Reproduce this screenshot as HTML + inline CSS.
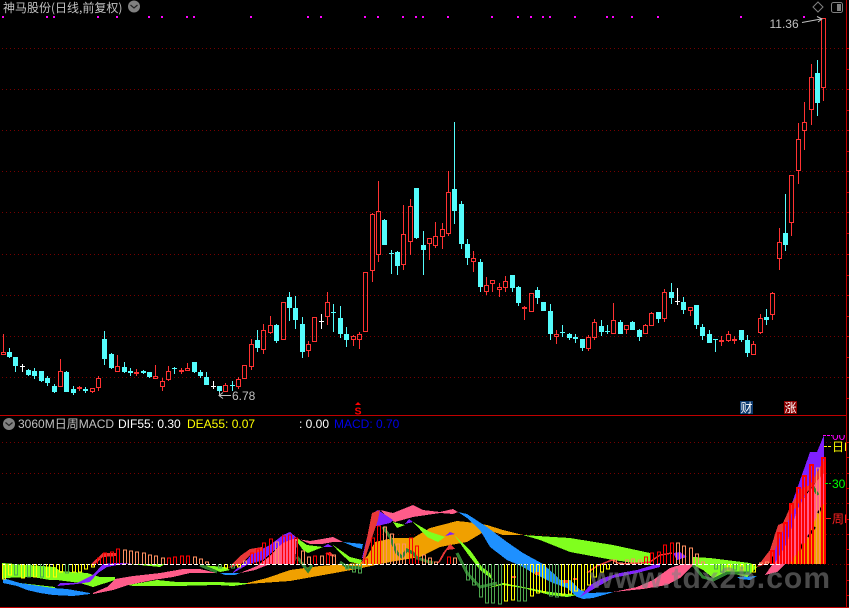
<!DOCTYPE html>
<html><head><meta charset="utf-8"><title>神马股份</title>
<style>
html,body{margin:0;padding:0;background:#000;width:849px;height:608px;overflow:hidden}
svg{position:absolute;left:0;top:0;display:block}
text{font-family:"Liberation Sans","WenQuanYi Zen Hei","Noto Sans CJK SC",sans-serif;font-size:12px}
</style></head><body>
<svg width="849" height="608" viewBox="0 0 849 608" xmlns="http://www.w3.org/2000/svg">
<rect width="849" height="608" fill="#000"/>
<g shape-rendering="crispEdges">
<path stroke="#760000" stroke-dasharray="1 3" fill="none" d="M2 48.5H845M2 89.5H845M2 130.5H845M2 171.5H845M2 212.5H845M2 254.5H845M2 295.5H845M2 336.5H845M2 377.5H845M2 442.5H845M2 473.5H845M2 503.5H845M2 534.5H845M780 564.5H845"/>
<path stroke="#c00000" fill="none" d="M0 415.5H846M0 607.5H849M846.5 0V608M847 48.5h2M847 69.5h2M847 89.5h2M847 110.5h2M847 130.5h2M847 151.5h2M847 171.5h2M847 192.5h2M847 212.5h2M847 233.5h2M847 254.5h2M847 275.5h2M847 295.5h2M847 316.5h2M847 336.5h2M847 357.5h2M847 377.5h2M847 398.5h2M847 442.5h2M847 457.5h2M847 473.5h2M847 488.5h2M847 503.5h2M847 519.5h2M847 534.5h2M847 549.5h2M847 564.5h2M847 580.5h2M847 595.5h2"/>
<path fill="#ff00ff" d="M2 16h2v2h-2zM46 16h2v2h-2zM53 16h2v2h-2zM97 16h2v2h-2zM116 16h2v2h-2zM148 16h2v2h-2zM161 16h2v2h-2zM186 16h2v2h-2zM193 16h2v2h-2zM250 16h2v2h-2zM307 16h2v2h-2zM320 16h2v2h-2zM364 16h2v2h-2zM377 16h2v2h-2zM402 16h2v2h-2zM415 16h2v2h-2zM422 16h2v2h-2zM447 16h2v2h-2zM491 16h2v2h-2zM517 16h2v2h-2zM530 16h2v2h-2zM542 16h2v2h-2zM549 16h2v2h-2zM574 16h2v2h-2zM606 16h2v2h-2zM612 16h2v2h-2zM631 16h2v2h-2zM657 16h2v2h-2zM740 16h2v2h-2zM803 16h2v2h-2z"/>
<!-- red candles -->
<path fill="none" stroke="#ff3232" d="M3.5 334V352M1.5 352.5h4V354.5h-4zM60.5 359V371M58.5 371.5h4V386.5h-4zM79.5 386V391M77.5 387.5h4V388.5h-4zM90.5 388.5h4V391.5h-4zM92.5 392V393M98.5 376V378M96.5 378.5h4V387.5h-4zM98.5 388V391M117.5 355V366M115.5 366.5h4V371.5h-4zM136.5 369V376M134.5 372.5h4V373.5h-4zM155.5 365V376M153.5 376.5h4V378.5h-4zM162.5 378V381M160.5 381.5h4V386.5h-4zM162.5 387V391M168.5 366V371M166.5 371.5h4V379.5h-4zM168.5 380V381M181.5 368V374M179.5 370.5h4V371.5h-4zM187.5 363V368M185.5 368.5h4V370.5h-4zM225.5 383V385M223.5 385.5h4V391.5h-4zM238.5 377V379M236.5 379.5h4V386.5h-4zM238.5 387V389M242.5 365.5h4V378.5h-4zM251.5 339V344M249.5 344.5h4V366.5h-4zM251.5 367V370M263.5 324V330M261.5 330.5h4V349.5h-4zM263.5 350V354M270.5 316V325M268.5 325.5h4V332.5h-4zM270.5 333V334M281.5 302.5h4V339.5h-4zM308.5 341V344M306.5 344.5h4V350.5h-4zM308.5 351V357M312.5 317.5h4V341.5h-4zM327.5 292V302M325.5 302.5h4V316.5h-4zM327.5 317V325M353.5 335V336M351.5 336.5h4V339.5h-4zM353.5 340V346M359.5 332V334M357.5 334.5h4V339.5h-4zM359.5 340V349M363.5 272.5h4V331.5h-4zM372.5 213V214M370.5 214.5h4V270.5h-4zM372.5 271V282M378.5 181V211M376.5 211.5h4V254.5h-4zM378.5 255V262M403.5 205V234M401.5 234.5h4V264.5h-4zM403.5 265V270M410.5 199V206M408.5 206.5h4V241.5h-4zM410.5 242V255M427.5 238.5h4V243.5h-4zM429.5 244V260M435.5 222V236M433.5 236.5h4V245.5h-4zM435.5 246V248M442.5 223V229M440.5 229.5h4V236.5h-4zM442.5 237V249M448.5 171V192M446.5 192.5h4V233.5h-4zM448.5 234V236M473.5 251V258M471.5 258.5h4V261.5h-4zM473.5 262V272M486.5 277V285M484.5 285.5h4V291.5h-4zM486.5 292V295M490.5 280.5h4V283.5h-4zM492.5 284V292M499.5 283V287M497.5 287.5h4V289.5h-4zM499.5 290V297M505.5 276V281M503.5 281.5h4V287.5h-4zM505.5 288V292M524.5 306V320M522.5 307.5h4V308.5h-4zM529.5 293.5h4V311.5h-4zM556.5 330V334M554.5 334.5h4V336.5h-4zM556.5 337V344M588.5 335V337M586.5 337.5h4V348.5h-4zM588.5 349V351M594.5 319V322M592.5 322.5h4V337.5h-4zM594.5 338V340M613.5 303V320M611.5 320.5h4V333.5h-4zM624.5 325.5h4V329.5h-4zM626.5 330V334M645.5 324V325M643.5 325.5h4V333.5h-4zM649.5 313.5h4V325.5h-4zM651.5 312V313M664.5 289V292M662.5 292.5h4V318.5h-4zM664.5 319V322M688.5 307.5h4V310.5h-4zM690.5 311V316M721.5 336V346M719.5 340.5h4V341.5h-4zM728.5 331V334M726.5 334.5h4V340.5h-4zM728.5 341V342M734.5 336V344M732.5 339.5h4V340.5h-4zM753.5 341V344M751.5 344.5h4V354.5h-4zM760.5 314V318M758.5 318.5h4V332.5h-4zM760.5 333V334M772.5 292V293M770.5 293.5h4V314.5h-4zM772.5 315V320M779.5 228V242M777.5 242.5h4V258.5h-4zM779.5 259V270M789.5 175.5h4V222.5h-4zM791.5 223V236M798.5 123V139M796.5 139.5h4V170.5h-4zM798.5 171V184M804.5 102V122M802.5 122.5h4V130.5h-4zM804.5 131V150M811.5 64V77M809.5 77.5h4V109.5h-4zM811.5 110V125M821.5 18.5h4V87.5h-4zM823.5 88V101"/>
<!-- cyan wicks -->
<path fill="none" stroke="#54fcfc" d="M9.5 348V358M15.5 357V372M28.5 369V376M34.5 368V379M41.5 371V382M47.5 376V386M54.5 384V393M66.5 371V392M73.5 386V395M85.5 387V393M104.5 331V365M111.5 353V369M124.5 362V373M130.5 368V376M143.5 370V374M149.5 372V378M174.5 367V374M194.5 362V373M200.5 370V378M206.5 372V385M219.5 386V393M232.5 381V391M257.5 330V352M276.5 324V343M289.5 292V321M295.5 296V329M302.5 317V358M333.5 304V332M340.5 306V338M346.5 327V347M384.5 219V245M391.5 250V274M397.5 251V275M416.5 188V239M423.5 231V275M454.5 122V224M461.5 201V249M467.5 239V265M480.5 259V292M512.5 275V292M518.5 286V306M537.5 287V304M543.5 302V311M550.5 304V340M562.5 325V337M569.5 333V340M575.5 334V343M582.5 339V351M601.5 320V336M607.5 325V334M620.5 320V334M632.5 321V330M639.5 329V341M658.5 312V323M671.5 283V304M683.5 297V314M696.5 305V329M702.5 324V340M709.5 330V343M715.5 339V352M741.5 330V342M747.5 335V357M766.5 309V325M785.5 194V251M817.5 60V116"/>
<!-- cyan bodies -->
<path fill="#54fcfc" d="M7 352h5v5h-5zM13 357h5v9h-5zM26 370h5v5h-5zM32 371h5v5h-5zM39 371h5v10h-5zM45 378h5v5h-5zM52 386h5v6h-5zM64 372h5v20h-5zM71 389h5v4h-5zM83 389h5v2h-5zM102 339h5v20h-5zM109 354h5v14h-5zM122 367h5v5h-5zM128 371h5v2h-5zM141 371h5v2h-5zM147 372h5v5h-5zM172 368h5v1h-5zM192 362h5v10h-5zM198 372h5v4h-5zM204 377h5v8h-5zM217 386h5v5h-5zM230 385h5v1h-5zM255 340h5v8h-5zM274 325h5v16h-5zM287 297h5v11h-5zM293 308h5v12h-5zM300 324h5v28h-5zM331 312h5v1h-5zM338 318h5v16h-5zM344 334h5v6h-5zM382 220h5v25h-5zM389 253h5v1h-5zM395 252h5v14h-5zM414 188h5v50h-5zM421 245h5v5h-5zM452 189h5v22h-5zM459 204h5v40h-5zM465 244h5v14h-5zM478 262h5v25h-5zM510 275h5v13h-5zM516 287h5v16h-5zM535 290h5v8h-5zM541 302h5v9h-5zM548 311h5v23h-5zM560 332h5v1h-5zM567 334h5v4h-5zM573 337h5v2h-5zM580 339h5v9h-5zM599 326h5v6h-5zM605 331h5v1h-5zM618 322h5v12h-5zM630 322h5v8h-5zM637 330h5v7h-5zM656 312h5v7h-5zM669 292h5v6h-5zM681 302h5v8h-5zM694 305h5v20h-5zM700 327h5v9h-5zM707 334h5v9h-5zM713 339h5v1h-5zM739 330h5v10h-5zM745 340h5v13h-5zM764 317h5v3h-5zM783 233h5v12h-5zM815 73h5v30h-5z"/>
<!-- white crosses -->
<path fill="none" stroke="#fff" d="M22.5 364V372M20 366.5h5M321.5 314V329M319 321.5h5M213.5 381V389M211 386.5h5M677.5 288V305M675 301.5h5"/>
</g>

<!-- MACD bands -->
<g shape-rendering="crispEdges">
<polygon fill="#f0a000" points="247,583 267,578 290,570 320,566 360,563 368,555 375,542 393,538 413,538 430,528 457,521 467,522 487,525 503,530 523,535 503,535 487,530 467,542 440,547 420,557 390,562 357,569 290,581 247,584"/>
<polygon fill="#80ff1e" points="2,563 55,567 60,571 87,573 100,577 115,577 115,580 93,587 80,583 57,580 50,580 33,577 3,578"/>
<polygon fill="#80ff1e" points="128,585 157,580 177,582 217,582 247,583 247,584 233,586 217,585 177,586 133,586"/>
<polygon fill="#80ff1e" points="20,583 55,587 55,589 20,585"/>
<polygon fill="#80ff1e" points="200,565 225,567 230,570 220,572 205,566"/>
<polygon fill="#80ff1e" points="120,564 165,564 160,567 150,566 130,564"/>
<polygon fill="#ff5c8a" points="93,593 107,587 115,579 133,576 160,573 183,569 200,569 217,573 213,573 190,573 173,577 153,580 128,585 113,590 93,594"/>
<polygon fill="#ff5c8a" points="240,573 257,566 270,556 280,545 290,539 297,539 310,541 322,539 333,537 343,542 333,542 322,544 310,544 297,538 295,564 270,564 255,570"/>
<polygon fill="#ff5c8a" points="380,510 393,513 413,505 423,510 440,512 453,509 458,512 453,514 440,513 413,517 395,522 390,520"/>
<polygon fill="#ff5c8a" points="613,592 637,587 653,580 670,568 683,564 693,564 693,565 680,578 667,585 643,589"/>
<polygon fill="#ff5c8a" points="765,575 772,565 780,543 792,513 810,490 824,472 824,564 785,564 777,572"/>
<polygon fill="#f0a000" points="790,564 797,553 807,540 820,507 825,503 825,564"/>
<path fill="none" stroke="#000" stroke-width="2" d="M808 537L815 527M800 550L803 543M818 513L822 507"/>
<polygon fill="#1e90ff" points="3,578 20,583 33,585 53,588 67,589 90,593 90,594 73,596 53,595 40,593 27,590 17,586 3,583"/>
<polygon fill="#1e90ff" points="343,542 363,544 362,549 355,547"/>
<polygon fill="#1e90ff" points="458,512 467,514 487,527 507,542 523,553 543,564 553,573 560,580 570,580 580,590 590,593 613,592 607,594 593,598 583,599 577,597 567,588 553,583 533,573 523,567 507,560 490,547 480,530 467,518"/>
<polygon fill="#1e90ff" points="737,577 757,576 750,580 740,579"/>
<polygon fill="#1e90ff" points="220,573 240,573 235,575 225,575"/>
<polygon fill="#80ff1e" points="297,538 307,545 323,547 308,553 303,550 298,543"/>
<polygon fill="#80ff1e" points="333,545 350,557 362,560 360,564 350,562 340,553"/>
<polygon fill="#80ff1e" points="393,522 405,525 397,528"/>
<polygon fill="#80ff1e" points="413,522 430,532 445,537 438,542 427,537"/>
<polygon fill="#80ff1e" points="455,536 470,550 482,567 490,573 493,580 480,570 467,553"/>
<polygon fill="#80ff1e" points="503,583 523,587 550,592 577,595 567,597 550,595 523,588 503,585 487,588"/>
<polygon fill="#80ff1e" points="523,535 553,537 570,538 613,545 650,553 650,565 613,560 570,552 540,540"/>
<polygon fill="#80ff1e" points="693,557 710,558 750,563 757,567 747,577 730,573 713,578 703,570 693,565"/>
<polygon fill="#8020ff" points="60,583 77,583 93,575 103,564 115,563 133,563 117,565 107,567 98,573 90,582 77,584 57,586"/>
<polygon fill="#8020ff" points="233,572 247,560 253,552 260,550 270,545 283,535 290,532 297,538 290,540 283,543 277,548 263,560 247,565 233,573"/>
<polygon fill="#8020ff" points="362,558 373,513 378,510 393,520 390,523 373,527 365,557"/>
<polygon fill="#8020ff" points="323,547 328,544 333,547"/>
<polygon fill="#8020ff" points="405,524 409,519 413,522"/>
<polygon fill="#8020ff" points="445,536 450,532 455,534"/>
<polygon fill="#8020ff" points="590,585 603,578 620,573 637,570 660,563 660,567 637,573 613,578 597,587 580,597"/>
<polygon fill="#8020ff" points="673,553 680,552 687,557 677,560"/>
<polygon fill="#8020ff" points="775,543 792,503 810,452 817,452 824,435 824,460 810,487 797,510 787,543 775,563"/>
<polygon fill="#e83838" points="757,567 770,550 778,525 783,523 792,503 802,488 810,485 824,460 824,473 803,497 792,513 780,537 770,563"/>
<polygon fill="#e83838" points="228,568 240,556 250,549 262,547 262,551 250,555 240,565"/>
<polygon fill="#e83838" points="90,565 103,553 117,553 117,556 103,557 93,566"/>
<polygon fill="#e83838" points="362,563 372,513 380,510 378,520 367,553 363,564"/>
<polygon fill="#e83838" points="325,553 330,552 335,557 330,556"/>
<polygon fill="#e83838" points="437,564 443,553 450,544 455,549 447,550 440,562"/>
<path fill="#e83838" d="M493 582h4v3h-4zM512 576h4v2h-4zM535 572h5v3h-5zM563 580h5v3h-5zM573 578h5v2h-5z"/>
<path fill="none" stroke="#e83838" stroke-width="1.5" d="M587 573L597 566L612 560L620 564L640 563L650 562L660 555L672 553"/>
<path fill="none" stroke="#308030" stroke-width="3" d="M297 557L308 571L312 565M340 562L347 567L362 568M383 527L390 537L397 553L402 557L407 550L413 553L417 558L433 563M457 553L467 573L480 587L497 583M693 565L703 577L713 580L727 573L750 573M200 565L217 572M813 487L818 495"/>
<path fill="none" stroke="#fff" stroke-dasharray="4 2" d="M2 564.5H780"/>
<!-- MACD bars -->
<path fill="none" stroke="#ffff00" d="M2.5 564V579h3V564M8.5 564V575h3V564M21.5 564V578h3V564M33.5 564V577h3V564M46.5 564V577h3V564M53.5 564V577h3V564M59.5 564V572h3V564M72.5 564V572h3V564M78.5 564V572h3V564M84.5 564V569h3V564M91.5 564V567h3V564M224.5 564V568h3V564M237.5 564V567h3V564M504.5 564V601h3V564M511.5 564V600h3V564M530.5 564V596h3V564M536.5 564V593h3V564M542.5 564V592h3V564M561.5 564V595h3V564M568.5 564V594h3V564M574.5 564V591h3V564M581.5 564V590h3V564M587.5 564V585h3V564M593.5 564V577h3V564M600.5 564V572h3V564M606.5 564V569h3V564M727.5 564V570h3V564M740.5 564V570h3V564M752.5 564V572h3V564"/>
<path fill="none" stroke="#4ea64e" d="M14.5 564V575h3V564M27.5 564V577h3V564M40.5 564V577h3V564M65.5 564V573h3V564M218.5 564V568h3V564M231.5 564V568h3V564M345.5 564V569h3V564M352.5 564V572h3V564M358.5 564V573h3V564M466.5 564V580h3V564M472.5 564V585h3V564M479.5 564V597h3V564M485.5 564V603h3V564M491.5 564V603h3V564M498.5 564V604h3V564M517.5 564V601h3V564M523.5 564V601h3V564M549.5 564V596h3V564M555.5 564V597h3V564M714.5 564V569h3V564M720.5 564V572h3V564M733.5 564V570h3V564M746.5 564V573h3V564"/>
<path fill="none" stroke="#ff9060" d="M123.5 564V550h3V564M129.5 564V551h3V564M135.5 564V552h3V564M142.5 564V553h3V564M148.5 564V555h3V564M154.5 564V556h3V564M161.5 564V558h3V564M193.5 564V557h3V564M199.5 564V559h3V564M205.5 564V562h3V564M243.5 564V561h3V564M275.5 564V542h3V564M301.5 564V551h3V564M307.5 564V557h3V564M320.5 564V556h3V564M332.5 564V555h3V564M383.5 564V527h3V564M390.5 564V534h3V564M396.5 564V544h3V564M402.5 564V544h3V564M422.5 564V555h3V564M428.5 564V558h3V564M434.5 564V562h3V564M453.5 564V558h3V564M613.5 564V560h3V564M619.5 564V563h3V564M625.5 564V560h3V564M631.5 564V559h3V564M638.5 564V560h3V564M676.5 564V543h3V564M682.5 564V546h3V564M689.5 564V548h3V564M695.5 564V554h3V564M701.5 564V562h3V564M759.5 564V563h3V564M765.5 564V562h3V564M816.5 564V468h3V564"/>
<path fill="none" stroke="#ff0000" d="M97.5 564V558h3V564M103.5 564V553h3V564M110.5 564V552h3V564M116.5 564V549h3V564M167.5 564V558h3V564M173.5 564V557h3V564M180.5 564V556h3V564M186.5 564V556h3V564M250.5 564V553h3V564M256.5 564V549h3V564M262.5 564V543h3V564M269.5 564V539h3V564M282.5 564V536h3V564M288.5 564V535h3V564M294.5 564V538h3V564M313.5 564V556h3V564M326.5 564V553h3V564M364.5 564V559h3V564M371.5 564V538h3V564M377.5 564V526h3V564M409.5 564V538h3V564M415.5 564V546h3V564M447.5 564V557h3V564M644.5 564V557h3V564M650.5 564V553h3V564M657.5 564V552h3V564M663.5 564V545h3V564M670.5 564V543h3V564"/>
<path fill="none" stroke="#ff0000" stroke-width="2" d="M771 564V551h3V564M778 564V533h3V564M784 564V523h3V564M790 564V504h3V564M797 564V488h3V564M803 564V476h3V564M810 564V465h3V564M822 564V458h3V564"/>
</g>

<!-- watermark -->
<text x="590" y="588" textLength="240" lengthAdjust="spacing" style="font-size:30px;font-weight:bold" fill="#808080" fill-opacity=".58">www.tdx2b.com</text>

<!-- header -->
<text x="3" y="12" fill="#c0c0c0" style="font-family:'WenQuanYi Zen Hei','Noto Sans CJK SC',sans-serif">神马股份(日线,前复权)</text>
<circle cx="134" cy="6.5" r="6" fill="#808080"/>
<path d="M130.5 5l3.5 3 3.5-3" fill="none" stroke="#222" stroke-width="1.2"/>
<path d="M818 2l5 5-5 5-5-5z" fill="none" stroke="#808080"/>
<rect x="831.5" y="2.5" width="11" height="10" rx="2" fill="none" stroke="#808080"/>
<rect x="837" y="4" width="4" height="7" fill="#808080"/>

<!-- price labels -->
<text x="232" y="400" fill="#c0c0c0">6.78</text>
<path d="M231 395.5H219M223 392.5l-4 3 4 3M219.5 392v4" fill="none" stroke="#c0c0c0"/>
<text x="769.5" y="28" fill="#c0c0c0">11.36</text>
<path d="M802 22.5L821 19M817 16.5l5 2.5-4 3" fill="none" stroke="#c0c0c0"/>

<!-- S marker -->
<path d="M358 402l3 3h-6z" fill="#ff0000"/>
<text x="354.5" y="414.5" fill="#ff0000" style="font-size:10.5px;font-weight:bold">S</text>

<!-- badges -->
<rect x="740" y="401" width="13" height="13" fill="#0d3a6e"/>
<text x="740.5" y="412" fill="#fff" style="font-family:'WenQuanYi Zen Hei','Noto Sans CJK SC',sans-serif">财</text>
<rect x="784" y="401" width="13" height="13" fill="#8b0000"/>
<text x="784.5" y="412" fill="#fff" style="font-family:'WenQuanYi Zen Hei','Noto Sans CJK SC',sans-serif">涨</text>

<!-- sub pane title -->
<circle cx="9" cy="424" r="6" fill="#808080"/>
<path d="M5.5 422.5l3.5 3 3.5-3" fill="none" stroke="#222" stroke-width="1.2"/>
<text x="18" y="428" fill="#c0c0c0">3060M日周MACD</text>
<text x="118" y="428" fill="#ffffff">DIF55: 0.30</text>
<text x="187" y="428" fill="#ffff00">DEA55: 0.07</text>
<text x="299" y="428" fill="#ffffff">: 0.00</text>
<text x="334" y="428" fill="#0000e6">MACD: 0.70</text>

<!-- right labels -->
<defs><clipPath id="c"><rect x="820" y="416" width="26" height="190"/></clipPath><clipPath id="d"><rect x="820" y="435" width="26" height="10"/></clipPath></defs>
<g clip-path="url(#d)"><text x="832" y="440" fill="#ff00ff">00</text></g>
<path d="M823 435.5h9" stroke="#ff00ff" stroke-dasharray="3 1" fill="none"/>
<g clip-path="url(#c)">
<path d="M824 446.5h7" stroke="#ffff00" stroke-dasharray="3 1" fill="none"/>
<text x="832" y="451" fill="#ffff00">日M</text>
<path d="M825 483.5h6" stroke="#00e000" stroke-dasharray="3 1" fill="none"/>
<text x="832" y="488" fill="#00ff00">30</text>
<path d="M826 518.5h5" stroke="#ff2020" fill="none"/>
<text x="832" y="523" fill="#ff2020">周M</text>
</g>
</svg>
</body></html>
